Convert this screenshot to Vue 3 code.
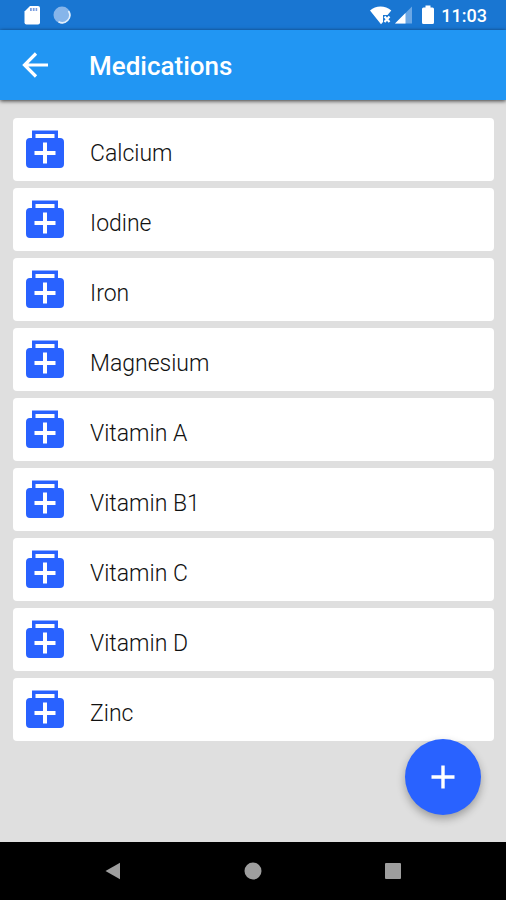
<script setup>
import { ref } from 'vue'

const medications = ref([
  'Calcium',
  'Iodine',
  'Iron',
  'Magnesium',
  'Vitamin A',
  'Vitamin B1',
  'Vitamin C',
  'Vitamin D',
  'Zinc',
])
</script>

<template>
  <div class="screen">
    <div class="status-bar">
      <div class="status-group">
        <svg width="16" height="20" viewBox="0 0 16 20" aria-hidden="true">
          <path d="M6 1h8a2 2 0 0 1 2 2v14.500a2 2 0 0 1-2 2H2.500a2 2 0 0 1-2-2V6.500z" fill="#fff" />
          <path d="M6 3h1.800v3H6zM8.800 3h1.800v3H8.800zM11.600 3h1.600v3h-1.600z" fill="#7c9fe0" />
        </svg>
        <svg width="18" height="18" viewBox="0 0 18 18" aria-hidden="true">
          <circle cx="9" cy="9" r="8.500" fill="#86b5ea" />
          <path d="M15.500 5A7.600 7.600 0 0 1 5.500 15.800" fill="none" stroke="#e3effb" stroke-width="1.600" />
        </svg>
      </div>
      <div class="status-group status-right">
        <svg width="22" height="19" viewBox="0 0 22 19" aria-hidden="true">
          <path d="M0 4.500C3 1.800 6.500.5 10.500.5s7.700 1.300 10.800 4L17.500 9H13v7l-2 2.200z" fill="#fff" />
          <path d="M14.500 10.500l5 5.500M19.500 10.500l-5 5.500" stroke="#fff" stroke-width="2.200" />
        </svg>
        <svg width="17" height="18" viewBox="0 0 17 18" aria-hidden="true">
          <path d="M0 17.500L17 .5v17z" fill="#6ba7e5" />
          <path d="M0 17.500L10.500 7v10.500z" fill="#fff" />
        </svg>
        <svg class="battery-icon" width="12" height="20" viewBox="0 0 12 20" aria-hidden="true">
          <path d="M3.500.5h5V2.500h2A1.500 1.500 0 0 1 12 4v13.500a1.500 1.500 0 0 1-1.500 1.500h-9A1.500 1.500 0 0 1 0 17.500V4a1.500 1.500 0 0 1 1.500-1.500h2z" fill="#fff" />
        </svg>
        <time class="clock">11:03</time>
      </div>
    </div>

    <header class="app-bar">
      <button class="back" type="button" aria-label="Back">
        <svg width="26" height="26" viewBox="0 0 26 26" aria-hidden="true">
          <path d="M14 1.500L2.500 13L14 24.500M2.500 13H26" fill="none" stroke="#fff" stroke-width="3.200" />
        </svg>
      </button>
      <h1 class="title">Medications</h1>
    </header>

    <main class="content">
      <ul class="list">
        <li v-for="name in medications" :key="name">
          <a class="card" href="#">
            <svg width="38" height="38" viewBox="0 0 38 38" aria-hidden="true">
              <path
                fill="#2962ff"
                fill-rule="evenodd"
                d="M6 .5h26v7.500h2a4 4 0 0 1 4 4V34a4 4 0 0 1-4 4H4a4 4 0 0 1-4-4V12a4 4 0 0 1 4-4h2zM9.500 4v4h19V4z"
              />
              <path d="M19 12.500v21M8.500 23h21" stroke="#fff" stroke-width="4" />
            </svg>
            <span class="name">{{ name }}</span>
          </a>
        </li>
      </ul>
      <button class="fab" type="button" aria-label="Add medication">
        <svg width="24" height="24" viewBox="0 0 24 24" aria-hidden="true">
          <path d="M12 .5v23M.5 12h23" stroke="#fff" stroke-width="3.400" />
        </svg>
      </button>
    </main>

    <nav class="nav-bar" aria-label="System">
      <button class="nav-button" type="button" aria-label="Back">
        <svg width="18" height="18" viewBox="0 0 18 18" aria-hidden="true">
          <path d="M1.500 9L16 .8v16.400z" fill="#9e9e9e" />
        </svg>
      </button>
      <button class="nav-button" type="button" aria-label="Home">
        <svg width="18" height="18" viewBox="0 0 18 18" aria-hidden="true">
          <circle cx="9" cy="9" r="8.500" fill="#9e9e9e" />
        </svg>
      </button>
      <button class="nav-button" type="button" aria-label="Overview">
        <svg width="18" height="18" viewBox="0 0 18 18" aria-hidden="true">
          <rect x="1" y="1" width="16" height="16" rx="1" fill="#9e9e9e" />
        </svg>
      </button>
    </nav>
  </div>
</template>

<style>
body {
  margin: 0;
  background: #dfdfdf;
}
</style>

<style scoped>
.screen {
  display: flex;
  flex-direction: column;
  min-height: 100vh;
  font-family: Roboto, "Liberation Sans", sans-serif;
  background: #dfdfdf;
}

svg {
  display: block;
  flex: none;
}

button {
  padding: 0;
  border: 0;
  background: none;
  cursor: pointer;
}

.status-bar {
  display: flex;
  align-items: center;
  justify-content: space-between;
  height: 30px;
  padding: 0 19px 0 24px;
  background: #1976d2;
  color: #fff;
}

.status-group {
  display: flex;
  align-items: center;
  gap: 13px;
}

.status-right {
  gap: 3px;
}

.battery-icon {
  margin: 0 4px 0 7px;
}

.clock {
  padding-top: 2px;
  font-size: 18px;
  line-height: 24px;
  font-weight: 500;
}

.app-bar {
  position: relative;
  display: flex;
  align-items: center;
  gap: 41px;
  height: 70px;
  padding: 0 22px;
  background: #2196f3;
  box-shadow: 0 1px 4px rgba(0, 0, 0, 0.75);
}

.title {
  margin: 0;
  padding-top: 2px;
  font-size: 26px;
  line-height: 32px;
  font-weight: 500;
  color: #fff;
}

.content {
  position: relative;
  flex: 1;
  padding: 18px 12px 18px 13px;
}

.list {
  display: flex;
  flex-direction: column;
  gap: 7px;
  margin: 0;
  padding: 0;
  list-style: none;
}

.card {
  display: flex;
  align-items: flex-start;
  gap: 26px;
  height: 51px;
  padding: 12px 13px 0;
  border-radius: 4px;
  background: #fff;
  color: #111;
  text-decoration: none;
}

.name {
  padding-top: 10px;
  font-size: 23px;
  line-height: 28px;
  font-weight: 350;
}

.fab {
  position: absolute;
  right: 25px;
  bottom: 27px;
  display: flex;
  align-items: center;
  justify-content: center;
  width: 76px;
  height: 76px;
  border-radius: 50%;
  background: #2962ff;
  box-shadow: 0 4px 8px rgba(0, 0, 0, 0.3);
}

.nav-bar {
  display: flex;
  justify-content: center;
  gap: 80px;
  height: 58px;
  background: #000;
}

.nav-button {
  display: flex;
  align-items: center;
  justify-content: center;
  width: 60px;
}
</style>
